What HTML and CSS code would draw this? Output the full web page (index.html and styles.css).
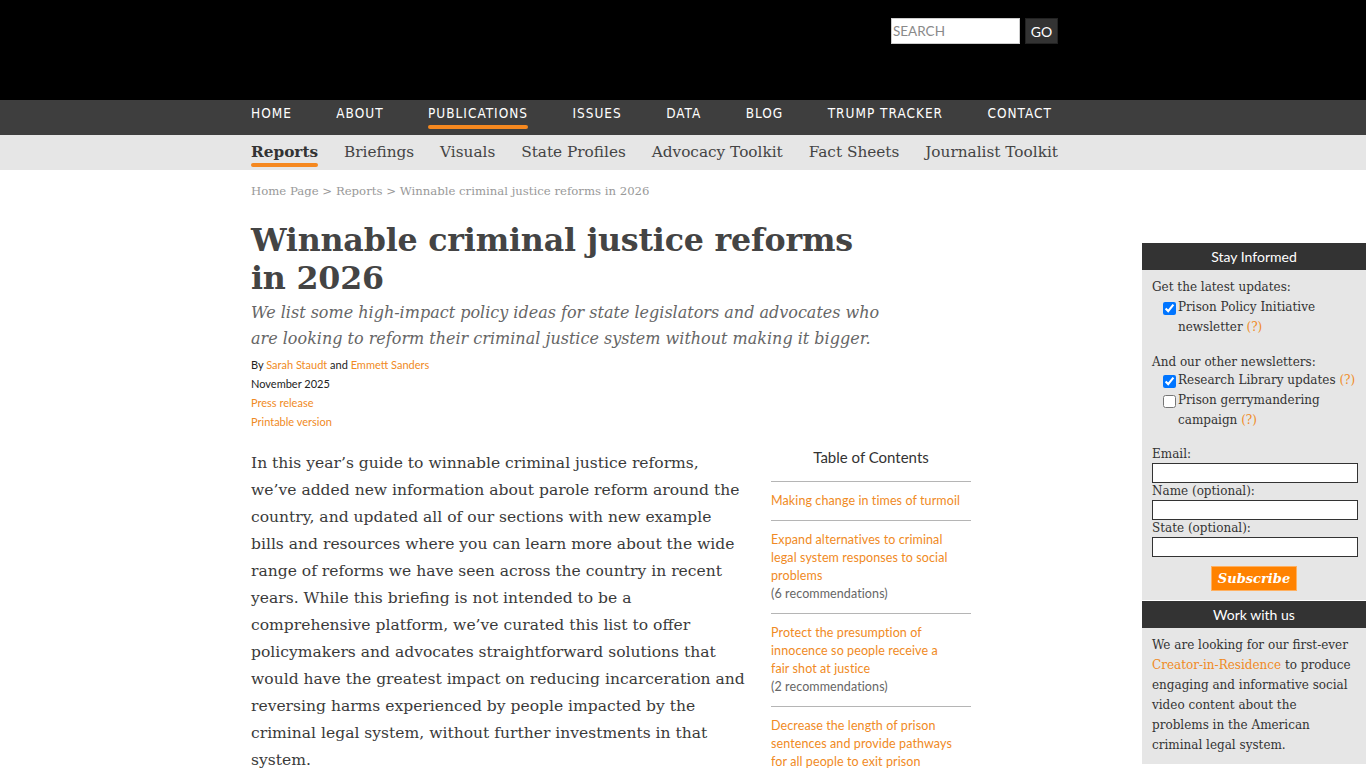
FILE: index.html
```html
<!DOCTYPE html>
<html lang="en">
<head>
<meta charset="utf-8">
<title>Winnable criminal justice reforms in 2026 | Prison Policy Initiative</title>
<link rel="stylesheet" href="styles.css">
</head>
<body>
<header class="top">
  <form class="wrap search">
    <input class="search-input" type="text" placeholder="SEARCH">
    <button class="search-go" type="button">GO</button>
  </form>
</header>
<nav class="mainnav">
  <ul class="wrap mainnav-list">
    <li><a href="#">HOME</a></li>
    <li><a href="#">ABOUT</a></li>
    <li><a href="#" class="active">PUBLICATIONS</a></li>
    <li><a href="#">ISSUES</a></li>
    <li><a href="#">DATA</a></li>
    <li><a href="#">BLOG</a></li>
    <li><a href="#">TRUMP TRACKER</a></li>
    <li><a href="#">CONTACT</a></li>
  </ul>
</nav>
<nav class="subnav">
  <ul class="wrap subnav-list">
    <li><a href="#" class="active">Reports</a></li>
    <li><a href="#">Briefings</a></li>
    <li><a href="#">Visuals</a></li>
    <li><a href="#">State Profiles</a></li>
    <li><a href="#">Advocacy Toolkit</a></li>
    <li><a href="#">Fact Sheets</a></li>
    <li><a href="#">Journalist Toolkit</a></li>
  </ul>
</nav>
<div class="layout">
  <main class="content">
    <div class="crumbs"><a href="#">Home Page</a> &gt; <a href="#">Reports</a> &gt; Winnable criminal justice reforms in 2026</div>
    <h1 class="title">Winnable criminal justice reforms in 2026</h1>
    <p class="subtitle">We list some high-impact policy ideas for state legislators and advocates who are looking to reform their criminal justice system without making it bigger.</p>
    <div class="byline">
      <div>By <a href="#">Sarah Staudt</a> and <a href="#">Emmett Sanders</a></div>
      <div>November 2025</div>
      <div><a href="#">Press release</a></div>
      <div><a href="#">Printable version</a></div>
    </div>
    <div class="article">
      <aside class="toc">
        <h2 class="toc-title">Table of Contents</h2>
        <ul class="toc-list">
          <li><a href="#">Making change in times of turmoil</a></li>
          <li><a href="#">Expand alternatives to criminal legal system responses to social problems</a><br><span class="count">(6 recommendations)</span></li>
          <li><a href="#">Protect the presumption of innocence so people receive a fair&nbsp;shot at justice</a><br><span class="count">(2 recommendations)</span></li>
          <li><a href="#">Decrease the length of prison sentences and provide pathways for all people to exit prison</a><br><span class="count">(5 recommendations)</span></li>
        </ul>
      </aside>
      <p>In this year’s guide to winnable criminal justice reforms, we’ve added new information about parole reform around the country, and updated all of our sections with new example bills and resources where you can learn more about the wide range of reforms we have seen across the country in recent years. While this briefing is not intended to be a comprehensive platform, we’ve curated this list to offer policymakers and advocates straightforward solutions that would have the greatest impact on reducing incarceration and reversing harms experienced by people impacted by the criminal legal system, without further investments in that system.</p>
      <p>Each recommendation includes links to model legislation or examples of states that have already implemented the policy.</p>
    </div>
  </main>
  <aside class="sidebar">
    <section class="box">
      <h3 class="box-head">Stay Informed</h3>
      <form class="box-body signup">
        <div class="group-label">Get the latest updates:</div>
        <label class="check"><input type="checkbox" checked><span>Prison Policy Initiative newsletter <a href="#">(?)</a></span></label>
        <div class="group-label spaced">And our other newsletters:</div>
        <label class="check"><input type="checkbox" checked><span>Research Library updates <a href="#">(?)</a></span></label>
        <label class="check"><input type="checkbox"><span>Prison gerrymandering campaign <a href="#">(?)</a></span></label>
        <label class="field-label spaced-lg">Email:</label>
        <input class="field" type="text">
        <label class="field-label">Name (optional):</label>
        <input class="field" type="text">
        <label class="field-label">State (optional):</label>
        <input class="field" type="text">
        <div class="submit-row"><button type="button" class="subscribe">Subscribe</button></div>
      </form>
    </section>
    <section class="box">
      <h3 class="box-head">Work with us</h3>
      <div class="box-body">
        <p class="work">We are looking for our first-ever <a href="#">Creator-in-Residence</a> to produce engaging and informative social video content about the problems in the American criminal legal system.</p>
      </div>
    </section>
  </aside>
</div>
</body>
</html>
```

FILE: styles.css
```css
* { box-sizing: border-box; }
html, body { margin: 0; padding: 0; }
body {
  background: #fff;
  color: #333;
  font-family: "DejaVu Serif", Georgia, serif;
  overflow: hidden;
}
a { text-decoration: none; color: #f08a24; }
ul { list-style: none; margin: 0; padding: 0; }

.wrap { width: 807px; margin-left: 251px; }

/* header */
.top { background: #000; height: 100px; }
.search { display: flex; justify-content: flex-end; padding-top: 18px; gap: 5px; margin-top: 0; margin-bottom: 0; }
.search-input {
  width: 129px; height: 26px; border: 1px solid #ccc; background: #fff;
  padding: 0 1px; font-family: "Lato", sans-serif; font-size: 13.5px; color: #333;
}
.search-input::placeholder { color: #8a8a8a; letter-spacing: 0; }
.search-go {
  width: 33px; height: 26px; background: #333; border: 1px solid #222; color: #fff;
  font-family: "Lato", sans-serif; font-size: 14px; padding: 0;
}

/* main nav */
.mainnav { background: #3e3e3e; height: 35px; }
.mainnav-list { display: flex; justify-content: space-between; width: 801px; }
.mainnav-list a {
  display: block; height: 35px; line-height: 26px; padding-top: 0;
  color: #fff; font-family: "DejaVu Sans Condensed", "DejaVu Sans", sans-serif; font-stretch: condensed;
  font-size: 13.5px; letter-spacing: 1px; position: relative;
}
.mainnav-list a.active::after {
  content: ""; position: absolute; left: 0; right: 0; top: 25px; height: 4px;
  background: #f5881f; border-radius: 2px;
}

/* sub nav */
.subnav { background: #e6e6e6; height: 35px; }
.subnav-list { display: flex; justify-content: space-between; }
.subnav-list a {
  display: block; height: 35px; line-height: 35px; color: #444;
  font-size: 15.3px; position: relative;
}
.subnav-list a.active { font-weight: bold; color: #333; }
.subnav-list a.active::after {
  content: ""; position: absolute; left: 0; right: 0; top: 28px; height: 4px;
  background: #f5881f; border-radius: 2px;
}

/* layout */
.layout { display: flex; padding-left: 251px; }
.content { width: 720px; padding-top: 12px; }
.sidebar { width: 224px; margin-left: auto; margin-top: 73px; }

.crumbs { font-size: 11.7px; line-height: 18px; color: #999; }
.crumbs a { color: #999; }

.title {
  margin: 21px 0 0; font-size: 31.7px; line-height: 38px; font-weight: bold; color: #444;
  width: 625px; letter-spacing: -0.2px;
}
.subtitle {
  margin: 3px 0 0; font-style: italic; font-size: 16px; line-height: 26px; color: #666; width: 640px;
}
.byline {
  margin-top: 3px; font-family: "Lato", sans-serif; font-size: 11px; line-height: 19px; color: #222;
}

.article { margin-top: 19px; font-size: 15.55px; line-height: 27px; color: #3a3a3a; }
.article p { margin: 0 0 20px; width: 720px; }

.toc { float: right; width: 200px; margin-left: 24.5px; margin-top: -1px; font-family: "Lato", sans-serif; }
.toc-title {
  margin: 0 0 16px; text-align: center; font-size: 15px; line-height: 16px; font-weight: normal; color: #333;
}
.toc-list li { border-top: 1px solid #b5b5b5; padding: 10px 0; font-size: 12.5px; line-height: 18px; letter-spacing: 0.1px; }
.toc-list .count { color: #666; }

/* sidebar */
.box-head {
  margin: 0; background: #333; color: #fff; text-align: center;
  font-family: "Lato", sans-serif; font-weight: normal; font-size: 14px; line-height: 27px; height: 27px;
}
.box-body { background: #e6e6e6; padding: 7px 10px 9px 10px; font-size: 12px; line-height: 20px; color: #333; }
.box + .box { margin-top: 1px; }
.signup { display: flex; flex-direction: column; margin: 0; padding-bottom: 9px; }
.group-label.spaced { margin-top: 16px; margin-bottom: -1px; line-height: 18px; }
.check { display: flex; align-items: flex-start; padding-left: 11px; }
.check input { margin: 5px 2px 0 0; width: 13px; height: 13px; flex: none; }
.field-label { line-height: 17px; }
.field-label.spaced-lg { margin-top: 16px; }
.field { width: 206px; height: 20px; border: 1px solid #333; background: #fff; padding: 0 2px; }
.submit-row { display: flex; justify-content: center; margin-top: 9px; }
.subscribe {
  background: #ff8200; color: #fff; border: 1px solid #ffb060; width: 86px; height: 25px; padding: 0;
  font-family: "DejaVu Serif", serif; font-style: italic; font-weight: bold; font-size: 13px;
}
.work { margin: 0; }
```
